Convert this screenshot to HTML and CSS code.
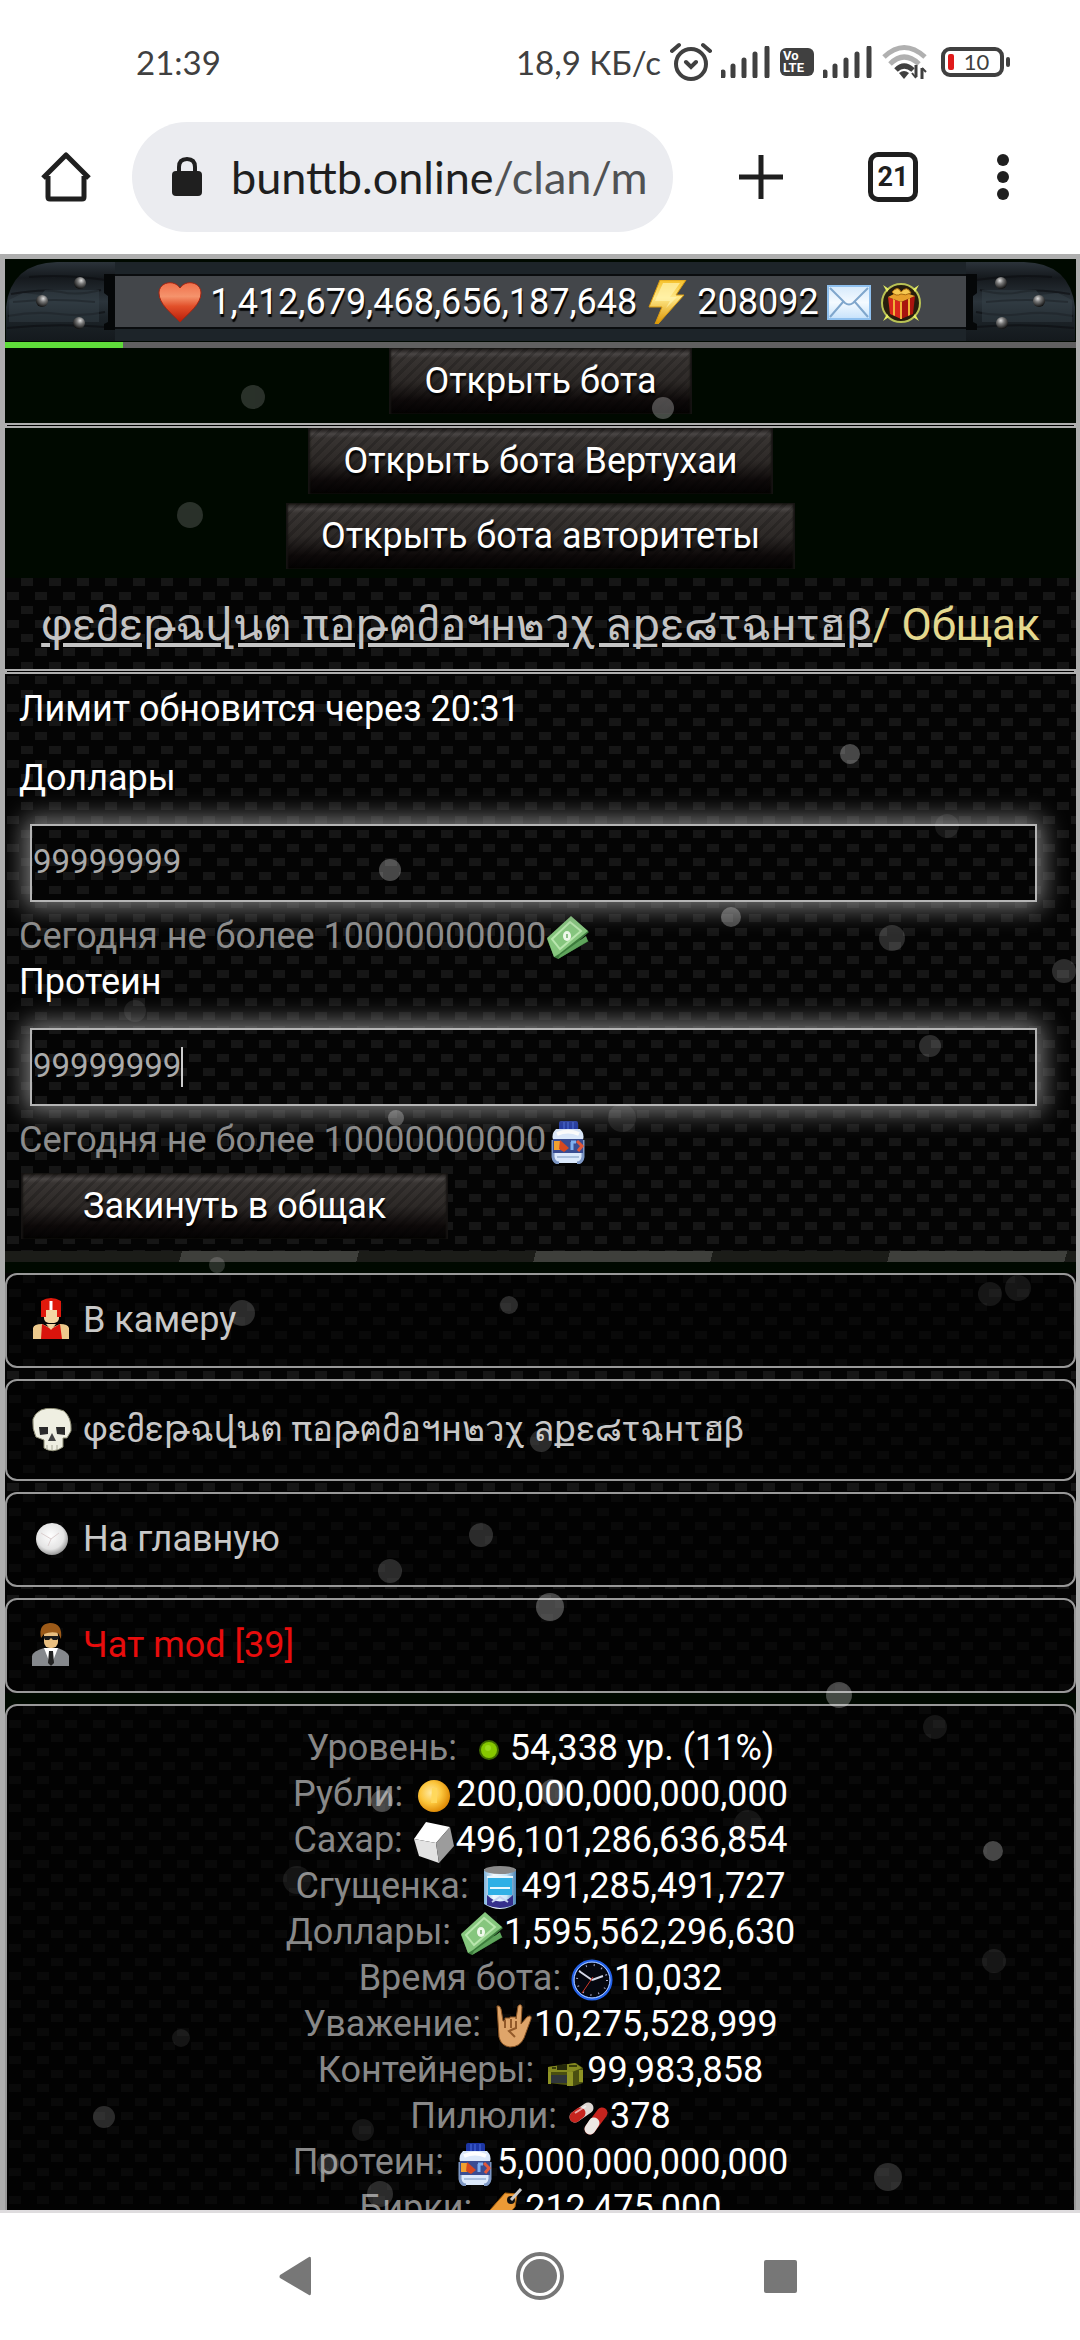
FILE: index.html
```
<!DOCTYPE html>
<html lang="ru">
<head>
  <meta charset="UTF-8">
  <meta name="viewport" content="width=device-width, initial-scale=1">
  <title>Общак</title>
  <link rel="stylesheet" href="styles.css">
</head>
<body>
  <!-- shared icons and gradients -->
  <svg class="sprite" width="0" height="0" aria-hidden="true">
    <defs>
      <linearGradient id="gHeart" x1="0" y1="0" x2="0" y2="1">
        <stop offset="0" stop-color="#f0704a"/><stop offset=".35" stop-color="#f5936c"/><stop offset=".6" stop-color="#e2502a"/><stop offset="1" stop-color="#b81c08"/>
      </linearGradient>
      <linearGradient id="gBolt" x1="0" y1="0" x2="0" y2="1">
        <stop offset="0" stop-color="#f5c02a"/><stop offset=".4" stop-color="#ffe98a"/><stop offset="1" stop-color="#dc9400"/>
      </linearGradient>
      <linearGradient id="gMail" x1="0" y1="0" x2="0" y2="1">
        <stop offset="0" stop-color="#d5e9fb"/><stop offset=".5" stop-color="#f4faff"/><stop offset="1" stop-color="#c6e2fb"/>
      </linearGradient>
      <radialGradient id="gCoin" cx=".4" cy=".4" r=".6">
        <stop offset="0" stop-color="#ffe9a0"/><stop offset=".55" stop-color="#fcc63c"/><stop offset="1" stop-color="#e08d08"/>
      </radialGradient>
      <radialGradient id="gBall" cx=".45" cy=".4" r=".6">
        <stop offset="0" stop-color="#fff"/><stop offset=".7" stop-color="#e4e4e4"/><stop offset="1" stop-color="#999"/>
      </radialGradient>
      <radialGradient id="gRivet" cx=".6" cy=".3" r=".7">
        <stop offset="0" stop-color="#ddd"/><stop offset=".4" stop-color="#777"/><stop offset="1" stop-color="#111"/>
      </radialGradient>
      <linearGradient id="gWood" x1="0" y1="0" x2="0" y2="1">
        <stop offset="0" stop-color="#2b333a"/><stop offset=".2" stop-color="#15191d"/><stop offset=".5" stop-color="#2b343b"/><stop offset=".7" stop-color="#1c2328"/><stop offset="1" stop-color="#14191d"/>
      </linearGradient>
      <linearGradient id="gCan" x1="0" y1="0" x2="1" y2="0">
        <stop offset="0" stop-color="#7fb4dc"/><stop offset=".3" stop-color="#f2faff"/><stop offset=".7" stop-color="#c8e6fa"/><stop offset="1" stop-color="#4c84b4"/>
      </linearGradient>
    </defs>

    <symbol id="i-heart" viewBox="0 0 44 44">
      <path d="M22 42C13 33 1 24 1 13 1 2 16-1 22 8 28-1 43 2 43 13 43 24 31 33 22 42Z" fill="url(#gHeart)" stroke="#a82410"/>
    </symbol>
    <symbol id="i-bolt" viewBox="0 0 44 44">
      <path d="M15 0H41L31 15H39L13 44H10L17 27H4Z" fill="url(#gBolt)" stroke="#d99a10"/>
      <path d="M18 3H35L25 17H32L21 28L25 21H10Z" fill="#fff3b0" opacity=".7"/>
    </symbol>
    <symbol id="i-mail" viewBox="0 0 44 44">
      <path d="M1 6H43V39H1Z" fill="url(#gMail)" stroke="#8fc0ee" stroke-width="2"/>
      <path d="M3 8L18 23Q22 26 26 23L41 8M3 37L16 22M41 37L28 22" fill="none" stroke="#7fa6cc" stroke-width="2"/>
    </symbol>
    <symbol id="i-gift" viewBox="0 0 44 44">
      <circle cx="22" cy="23" r="19" fill="#271d0d" stroke="#b9c255" stroke-width="2"/>
      <path d="M4 5L10 9 8 12ZM40 5L34 9 36 12ZM4 41L10 37 8 34ZM40 41L34 37 36 34Z" fill="#e6ee62"/>
      <path d="M9 17L22 22V39L11 34Z" fill="#d8281c"/><path d="M22 22L36 16 34 34 22 39Z" fill="#a8140e"/>
      <path d="M9 17L21 11 36 16 22 22Z" fill="#e8a02c"/>
      <path d="M14 19L16 20V36L14 35ZM29 19L31 18V35L29 36ZM21 22H23V39H21Z" fill="#f0b238"/>
      <path d="M13 12Q19 5 22 12 28 5 32 13Q26 16 22 14 17 17 13 12Z" fill="#f6c850" stroke="#a86a10"/>
    </symbol>
    <symbol id="i-cash" viewBox="0 0 44 44">
      <path d="M1 23L25 1 43 16 34 24 43 25 12 43 8 41Z" fill="#3c7c3c"/>
      <path d="M1 22L25 0 42 15 13 38 8 41Z" fill="#86c67e"/>
      <path d="M14 39L40 20 42 25 12 43Z" fill="#5fa45c"/>
      <path d="M6 23L24 6 35 15 14 33Z" fill="none" stroke="#b9e6ae" stroke-width="2"/>
      <ellipse cx="21" cy="20" rx="4" ry="5" fill="#eef8ea"/><path d="M21 18V22" stroke="#8fc28a" stroke-width="2"/>
    </symbol>
    <symbol id="i-jar" viewBox="0 0 44 44">
      <rect x="13" y="1" width="19" height="11" rx="2" fill="#1d36a4"/><path d="M18 2V11M22 2V11M27 2V11" stroke="#4b6fe0"/>
      <path d="M10 9H34Q39 14 37 20V37Q36 43 31 43H13Q8 43 7 37V20Q5 14 10 9Z" fill="#dce9fb"/>
      <path d="M7 20V37Q8 43 13 43M37 20V37Q36 43 31 43" fill="none" stroke="#7d97c4" stroke-width="3"/>
      <path d="M11 14Q22 9 33 14" stroke="#fff" stroke-width="4" fill="none"/>
      <rect x="7" y="19" width="30" height="14" fill="#3a4d92"/>
      <path d="M8 21H14V30H8Z" fill="#f0a030"/><path d="M14 20L23 28 18 32 13 29Z" fill="#d6481f"/><path d="M25 22H30M26 22V30" stroke="#7fb0f0" stroke-width="3"/><path d="M31 21L36 26 32 31" stroke="#e2583a" stroke-width="3" fill="none"/>
      <path d="M11 37H33" stroke="#a9bfdd" stroke-width="2"/>
    </symbol>
    <symbol id="i-cap" viewBox="0 0 44 44">
      <path d="M4 41V30Q5 26 13 26L22 30 31 26Q39 26 40 30V41Z" fill="#ecc98c"/>
      <path d="M13 26L22 31 31 26 33 41H12Z" fill="#d9140c"/>
      <rect x="15" y="11" width="15" height="14" rx="5" fill="#f3d7a2"/>
      <path d="M12 3Q22-3 32 3V19H28V12H17V19H12Z" fill="#e0190c"/><path d="M22 3V12" stroke="#fff" stroke-width="3"/>
      <path d="M17 26L22 32 27 26Z" fill="#f3d7a2"/>
    </symbol>
    <symbol id="i-skull" viewBox="0 0 44 44">
      <path d="M12 2Q22-2 35 3 43 10 42 23L38 30H34V39Q24 46 15 40V32L7 29Q3 21 4 11 6 5 12 2Z" fill="#efefe2" stroke="#8b8b73"/>
      <path d="M10 19H19V26L11 27ZM27 19H36V27L28 26Z" fill="#2a2a2a"/><path d="M23 25L19 33H27Z" fill="#444"/>
      <path d="M18 37V42M23 37V43M28 37V42" stroke="#a8a897"/>
    </symbol>
    <symbol id="i-ball" viewBox="0 0 44 44">
      <circle cx="23" cy="22" r="16" fill="url(#gBall)"/>
      <path d="M12 16L22 22 30 16M22 22L19 29" fill="none" stroke="#dccfcf"/>
    </symbol>
    <symbol id="i-agent" viewBox="0 0 44 44">
      <path d="M3 43V33Q4 28 15 25H29Q38 28 40 33V43Z" fill="#85888c"/>
      <path d="M15 25L22 43 29 25Z" fill="#fff"/><path d="M20 28H24L25 40 22 43 19 40Z" fill="#222"/>
      <rect x="15" y="6" width="14" height="19" rx="6" fill="#e9bf80"/>
      <path d="M12 15Q9 1 21 0 34 0 32 16L29 10Q22 8 15 11Z" fill="#9c5a18"/>
      <path d="M14 13H30V15L28 17H24L22 15 20 17H16Z" fill="#1a1a1a"/>
    </symbol>
    <symbol id="i-dot" viewBox="0 0 44 44"><circle cx="23" cy="22" r="10" fill="#3f6a00"/><circle cx="23" cy="22" r="8" fill="#86c800"/><circle cx="22" cy="20" r="3" fill="#9bdb1c"/></symbol>
    <symbol id="i-coin" viewBox="0 0 44 44"><circle cx="22" cy="22" r="16" fill="url(#gCoin)"/><path d="M20 14H25V29H19Z" fill="#ffd85c"/></symbol>
    <symbol id="i-sugar" viewBox="0 0 44 44">
      <path d="M2 19L14 2 38 7 24 23Z" fill="#fff"/><path d="M2 19L24 23 27 43 7 36Z" fill="#e3e3e3"/><path d="M24 23L38 7 42 26 27 43Z" fill="#9c9c9c"/>
    </symbol>
    <symbol id="i-can" viewBox="0 0 44 44">
      <path d="M6 3V38Q22 48 38 38V3Z" fill="url(#gCan)"/><path d="M10 12H34V29H10Z" fill="#30b0e6"/>
      <path d="M9 29Q22 42 35 29V39Q22 45 9 39Z" fill="#35308c"/><path d="M14 36L22 31 30 36" stroke="#c7d4f0" stroke-width="2" fill="none"/>
      <ellipse cx="22" cy="4" rx="16" ry="4" fill="#8a8a8a"/><path d="M9 11H35M12 22H32" stroke="#eaf8ff" stroke-width="2"/>
    </symbol>
    <symbol id="i-clock" viewBox="0 0 44 44">
      <circle cx="22" cy="22" r="19" fill="#05070f" stroke="#2260e8" stroke-width="3"/><circle cx="22" cy="22" r="18" fill="none" stroke="#b6d0ff"/>
      <circle cx="22" cy="22" r="15" fill="none" stroke="#aac" stroke-width="2" stroke-dasharray="1 7"/>
      <path d="M22 22L9 13M22 22L33 18" stroke="#d4d8e8" stroke-width="2"/><path d="M23 19L12 35" stroke="#d03828"/>
    </symbol>
    <symbol id="i-hand" viewBox="0 0 44 44">
      <path d="M7 2Q10 1 11 5L13 17H15V14H20V13H26V15L28 2Q31-1 32 3L31 20 37 13Q42 10 41 15L34 34Q30 43 20 43 11 42 9 33Z" fill="#dfa56a" stroke="#8a5424"/>
      <path d="M15 16V24M21 15V24M26 17V24L19 27 25 33" fill="none" stroke="#935a2a" stroke-width="2"/>
    </symbol>
    <symbol id="i-crate" viewBox="0 0 44 44">
      <path d="M5 17L33 13 40 18V33L31 36 6 33Z" fill="#4a4f10"/><path d="M8 25H27V33H8Z" fill="#30363a"/>
      <path d="M5 17L32 13 39 18 29 22H5Z" fill="#858a20"/><path d="M14 15L24 14V20H14Z" fill="#24280a"/>
      <path d="M5 22H8V34H5ZM24 22H30V36H24ZM36 20H40V32H36Z" fill="#8f9424"/>
      <path d="M9 18H13M26 16H34" stroke="#3b3f0c" stroke-width="2"/>
    </symbol>
    <symbol id="i-pills" viewBox="0 0 44 44">
      <g stroke-width="11" stroke-linecap="round"><path d="M9 21L22 12" stroke="#ded8d4"/><path d="M9 21L14 17" stroke="#c6241e"/><path d="M36 17L24 33" stroke="#c6241e"/><path d="M28 27L24 33" stroke="#eee8e4"/></g>
      <path d="M9 17L20 10" stroke="#fff" stroke-width="2" opacity=".6"/>
    </symbol>
    <symbol id="i-tag" viewBox="0 0 44 44">
      <path d="M2 30L24 5 36 6 34 19 13 42Z" fill="#ec9a36" stroke="#a8600c"/><circle cx="30" cy="12" r="4" fill="#111"/>
      <path d="M30 12L40 1" stroke="#ccc" stroke-width="3"/><path d="M12 29L22 31M17 23L26 25" stroke="#91520c" stroke-width="2"/>
    </symbol>
    <symbol id="i-signal" viewBox="0 0 50 32">
      <path d="M2 26V30M12 20V30M23 14V30M34 8V30M46 2V30" stroke="#404040" stroke-width="5" stroke-linecap="round"/>
    </symbol>
    <symbol id="i-end" viewBox="0 0 110 79">
      <path d="M1 79V45Q6 1 52 0H110V79Z" fill="url(#gWood)"/>
      <path d="M24 15Q60 12 100 18M6 32Q40 26 56 30T96 28M3 54Q30 49 54 52T100 50M2 66Q50 61 100 65M8 40Q50 36 90 40" fill="none" stroke="#0b0d10" stroke-width="2" opacity=".6"/>
      <path d="M4 38L18 31 36 33 40 28 94 28V60H4Z" fill="#39454d" opacity=".4"/>
      <circle cx="75" cy="21" r="6" fill="url(#gRivet)"/><circle cx="37" cy="39" r="6" fill="url(#gRivet)"/><circle cx="74" cy="61" r="6" fill="url(#gRivet)"/>
      <path d="M99 12H110V68H99V62L103 60V34L99 31Z" fill="#050708"/>
    </symbol>
  </svg>

  <div class="status-bar">
    <span class="status-time">21:39</span>
    <div class="status-icons">
      <span class="status-speed">18,9 КБ/с</span>
      <svg width="42" height="40" viewBox="0 0 42 40" fill="none" stroke="#404040" stroke-width="4" stroke-linecap="round"><circle cx="21" cy="22" r="15"/><path d="M2 9L9 3M33 3L40 9M16 20L21 25 26 20"/></svg>
      <svg width="50" height="32"><use href="#i-signal"/></svg>
      <span class="volte">Vo<br>LTE</span>
      <svg width="50" height="32"><use href="#i-signal"/></svg>
      <svg class="wifi" width="46" height="36" viewBox="0 0 46 36" fill="none" stroke-width="5"><path d="M2 13Q22-6 43 13" stroke="#b0b0b0"/><path d="M8 20Q22 6 37 20" stroke="#b0b0b0"/><path d="M14 26Q22 18 31 26" stroke="#404040"/><path d="M17 29Q22 25 27 29L22 35Z" fill="#404040"/><path d="M34 21V33M40 24V35" stroke="#404040" stroke-width="3"/><path d="M30 29L34 34M40 24L44 28" stroke="#404040" stroke-width="2"/></svg>
      <span class="battery">10</span>
    </div>
  </div>

  <nav class="browser-bar">
    <button class="tool tool-home" aria-label="Домой">
      <svg width="50" height="50" viewBox="0 0 50 50" fill="none" stroke="#1f1f1f" stroke-width="5"><path d="M2 26L25 3 48 26M7 24V45Q7 47 9 47H41Q43 47 43 45V24" stroke-linejoin="round"/></svg>
    </button>
    <a class="url-box" href="#">
      <svg width="32" height="40" viewBox="0 0 32 40"><rect x="1" y="14" width="30" height="25" rx="4" fill="#1f1f1f"/><path d="M8 16V10Q8 2 16 2T24 10V16" fill="none" stroke="#1f1f1f" stroke-width="4"/></svg>
      <span class="url-text">bunttb.online<span class="url-path">/clan/m</span></span>
    </a>
    <button class="tool tool-plus" aria-label="Новая вкладка">
      <svg width="46" height="46" viewBox="0 0 46 46"><path d="M23 1V45M1 23H45" stroke="#1f1f1f" stroke-width="5"/></svg>
    </button>
    <button class="tool tool-tabs">21</button>
    <button class="tool tool-menu" aria-label="Меню">
      <svg width="12" height="46" viewBox="0 0 12 46" fill="#1f1f1f"><circle cx="6" cy="6" r="6"/><circle cx="6" cy="23" r="6"/><circle cx="6" cy="40" r="6"/></svg>
    </button>
  </nav>

  <main class="game">
    <header class="hud">
      <svg class="hud-end" width="110" height="79"><use href="#i-end"/></svg>
      <div class="hud-panel">
        <svg class="icon"><use href="#i-heart"/></svg>
        <span>1,412,679,468,656,187,648</span>
        <svg class="icon"><use href="#i-bolt"/></svg>
        <span>208092</span>
        <svg class="icon"><use href="#i-mail"/></svg>
        <svg class="icon"><use href="#i-gift"/></svg>
      </div>
      <svg class="hud-end hud-end-right" width="110" height="79"><use href="#i-end"/></svg>
    </header>
    <div class="exp"><div class="exp-fill" style="width: 11%"></div></div>

    <div class="bots"><button class="btn">Открыть бота</button></div>
    <div class="line"></div>
    <div class="bots">
      <button class="btn">Открыть бота Вертухаи</button>
      <button class="btn">Открыть бота авторитеты</button>
    </div>

    <section class="weave">
      <h1 class="title"><a href="#">φεმεթฉվนต πอթฅმอฯн๒วχ ลքε๘τฉнτฮβ</a>/ Общак</h1>
      <div class="line"></div>
      <form class="fund">
        <p class="limit">Лимит обновится через 20:31</p>
        <label for="dollars">Доллары</label>
        <div class="field"><input type="text" id="dollars" value="99999999"></div>
        <p class="hint">Сегодня не более 10000000000<svg class="icon"><use href="#i-cash"/></svg></p>
        <label for="protein">Протеин</label>
        <div class="field"><input type="text" id="protein" value="99999999"><span class="caret"></span></div>
        <p class="hint">Сегодня не более 10000000000<svg class="icon"><use href="#i-jar"/></svg></p>
        <button type="button" class="btn btn-submit">Закинуть в общак</button>
      </form>
      <div class="stripes"></div>
    </section>

    <nav class="menu">
      <a class="card" href="#"><svg class="icon"><use href="#i-cap"/></svg>В камеру</a>
      <a class="card card-clan" href="#"><svg class="icon"><use href="#i-skull"/></svg>φεმεթฉվนต πอթฅმอฯн๒วχ ลքε๘τฉнτฮβ</a>
      <a class="card" href="#"><svg class="icon"><use href="#i-ball"/></svg>На главную</a>
      <a class="card card-chat" href="#"><svg class="icon"><use href="#i-agent"/></svg>Чат mod [39]</a>
    </nav>

    <div class="stats">
      <div>Уровень: <svg class="icon"><use href="#i-dot"/></svg><b>54,338 ур. (11%)</b></div>
      <div>Рубли: <svg class="icon"><use href="#i-coin"/></svg><b>200,000,000,000,000</b></div>
      <div>Сахар: <svg class="icon"><use href="#i-sugar"/></svg><b>496,101,286,636,854</b></div>
      <div>Сгущенка: <svg class="icon"><use href="#i-can"/></svg><b>491,285,491,727</b></div>
      <div>Доллары: <svg class="icon"><use href="#i-cash"/></svg><b>1,595,562,296,630</b></div>
      <div>Время бота: <svg class="icon"><use href="#i-clock"/></svg><b>10,032</b></div>
      <div>Уважение: <svg class="icon"><use href="#i-hand"/></svg><b>10,275,528,999</b></div>
      <div>Контейнеры: <svg class="icon"><use href="#i-crate"/></svg><b>99,983,858</b></div>
      <div>Пилюли: <svg class="icon"><use href="#i-pills"/></svg><b>378</b></div>
      <div>Протеин: <svg class="icon"><use href="#i-jar"/></svg><b>5,000,000,000,000</b></div>
      <div>Бирки: <svg class="icon"><use href="#i-tag"/></svg><b>212,475,000</b></div>
    </div>

    <!-- falling snow -->
    <svg class="snow" viewBox="5 259 1071 1951" preserveAspectRatio="xMidYMin slice" fill="#fff" aria-hidden="true">
      <g opacity=".16">
        <circle cx="253" cy="397" r="12"/><circle cx="190" cy="515" r="13"/><circle cx="892" cy="938" r="13"/><circle cx="1064" cy="971" r="12"/>
        <circle cx="242" cy="1313" r="13"/><circle cx="509" cy="1305" r="9"/><circle cx="390" cy="1571" r="12"/><circle cx="930" cy="1046" r="11"/>
        <circle cx="481" cy="1535" r="12"/><circle cx="104" cy="2117" r="11"/><circle cx="888" cy="2177" r="14"/><circle cx="217" cy="1265" r="8"/>
        <circle cx="541" cy="1441" r="11"/><circle cx="380" cy="2194" r="13"/><circle cx="328" cy="2164" r="11"/>
      </g>
      <g opacity=".08">
        <circle cx="990" cy="1294" r="12"/><circle cx="1018" cy="1288" r="13"/><circle cx="622" cy="1118" r="14"/><circle cx="135" cy="1011" r="11"/>
        <circle cx="947" cy="826" r="12"/><circle cx="935" cy="1727" r="12"/><circle cx="297" cy="1880" r="14"/><circle cx="994" cy="1961" r="12"/>
        <circle cx="181" cy="2038" r="9"/><circle cx="363" cy="2130" r="11"/><circle cx="748" cy="1824" r="14"/>
      </g>
      <g opacity=".27">
        <circle cx="663" cy="408" r="11"/><circle cx="850" cy="754" r="10"/><circle cx="390" cy="870" r="11"/><circle cx="731" cy="917" r="10"/>
        <circle cx="396" cy="1118" r="8"/><circle cx="550" cy="1607" r="14"/><circle cx="839" cy="1695" r="13"/><circle cx="382" cy="1801" r="11"/>
        <circle cx="553" cy="1792" r="13"/><circle cx="993" cy="1851" r="10"/>
      </g>
    </svg>
  </main>

  <nav class="system-bar">
    <button aria-label="Назад"><svg width="50" height="50" viewBox="0 0 50 50" fill="#777"><path d="M5 24L34 6Q36 5 36 8V42Q36 45 34 44L5 27Q4 26 5 24Z"/></svg></button>
    <button aria-label="Домой"><svg width="50" height="50" viewBox="0 0 50 50"><circle cx="25" cy="25" r="22" fill="none" stroke="#777" stroke-width="4"/><circle cx="25" cy="25" r="17" fill="#777"/></svg></button>
    <button aria-label="Недавние"><svg width="50" height="50" viewBox="0 0 50 50" fill="#777"><rect x="9" y="9" width="33" height="33" rx="2"/></svg></button>
  </nav>
</body>
</html>
```

FILE: styles.css
```
* {
  box-sizing: border-box;
}

body {
  margin: 0;
  height: 100vh;
  display: flex;
  flex-direction: column;
  background: #fff;
  font-family: Roboto, "Noto Sans", "DejaVu Sans", sans-serif;
  font-size: 36px;
  line-height: 46px;
}

button {
  font: inherit;
  border: 0;
  padding: 0;
  background: none;
}

svg {
  flex: none;
}

a {
  color: inherit;
  text-decoration: none;
}

p,
h1 {
  margin: 0;
  font-weight: 400;
}

.sprite {
  position: absolute;
}

.icon {
  width: 44px;
  height: 44px;
  margin: -4px 0;
  vertical-align: middle;
}

/* Phone status bar */
.status-bar {
  flex: none;
  height: 100px;
  padding: 24px 70px 0 136px;
  display: flex;
  align-items: center;
  justify-content: space-between;
  color: #404040;
  font-family: Lato, sans-serif;
  font-size: 33px;
}

.status-icons {
  display: flex;
  align-items: center;
  gap: 9px;
}

.volte {
  width: 34px;
  padding: 2px 3px;
  border-radius: 6px;
  background: #404040;
  color: #fff;
  font: 700 13px/12px Roboto, sans-serif;
}

.battery {
  position: relative;
  width: 63px;
  height: 30px;
  margin: 0 6px 0 4px;
  padding-left: 8px;
  border: 4px solid #404040;
  border-radius: 9px;
  font: 22px/22px Lato, sans-serif;
  text-align: center;
}

.battery::before,
.battery::after {
  content: "";
  position: absolute;
  background: #404040;
  border-radius: 2px;
}

.battery::before {
  left: 3px;
  top: 3px;
  width: 6px;
  height: 16px;
  background: #e01a1a;
}

.battery::after {
  right: -10px;
  top: 6px;
  width: 4px;
  height: 10px;
}

/* Browser toolbar */
.browser-bar {
  flex: none;
  height: 154px;
  padding: 0 71px 0 41px;
  display: flex;
  align-items: center;
}

.tool {
  display: flex;
  align-items: center;
  justify-content: center;
}

.url-box {
  flex: 1;
  height: 110px;
  margin: 0 65px 0 41px;
  padding: 0 20px 0 39px;
  display: flex;
  align-items: center;
  gap: 28px;
  border-radius: 55px;
  background: #ebecf0;
  color: #1f1f1f;
  font-family: Lato, sans-serif;
  font-size: 45px;
  line-height: 60px;
}

.url-text {
  white-space: nowrap;
}

.url-path {
  color: #505254;
}

.tool-tabs {
  width: 50px;
  height: 50px;
  margin: 0 79px 0 84px;
  border: 5px solid #1f1f1f;
  border-radius: 10px;
  font-size: 27px;
  font-weight: 700;
  color: #1f1f1f;
}

/* Game page */
.game {
  position: relative;
  flex: 1;
  min-height: 0;
  overflow: hidden;
  border: solid #aeaeae;
  border-width: 5px 4px 0 5px;
  background: #000900;
  color: #fff;
}

.hud {
  display: flex;
  height: 83px;
  padding: 3px 0 1px;
}

.hud-end-right {
  transform: scaleX(-1);
}

.hud-panel {
  flex: 1;
  display: flex;
  align-items: center;
  justify-content: center;
  gap: 8px;
  border: solid #1d2429;
  border-width: 12px 0;
  background: #43464a;
  box-shadow: inset 0 2px #0a0c0e, inset 0 -2px #0a0c0e;
  text-shadow: 1px 3px 1px #000;
}

.exp {
  height: 6px;
  background: #606060;
}

.exp-fill {
  height: 100%;
  background: #5fdc3a;
}

.bots {
  display: flex;
  flex-direction: column;
  align-items: center;
}

.btn {
  height: 66px;
  margin-bottom: 9px;
  padding: 0 35px;
  color: #fff;
  text-shadow: 1px 3px 2px #000;
  background:
    repeating-linear-gradient(135deg, rgba(0, 0, 0, 0.18) 0 3px, transparent 3px 8px),
    linear-gradient(#1a1716 0, #4a4645 6px, #383432 10px, #2d2927 50%, #0d0909 80%, #030202);
  box-shadow: inset 2px 0 2px #161312, inset -2px 0 2px #161312;
}

.line {
  height: 5px;
  border: 2px solid #aeaeae;
  background: #000;
}

/* black woven background, two bricks per 28px tile */
.weave,
.menu,
.card,
.stats {
  background-color: #040404;
  background-image:
    conic-gradient(from 90deg at 16px 8px, transparent 270deg, #161616 0),
    conic-gradient(from 90deg at 16px 8px, transparent 270deg, #161616 0);
  background-position: 0 0, 14px 14px;
  background-size: 28px 28px;
}

.title {
  padding: 24px 0 21px;
  text-align: center;
  font-size: 44px;
  color: #e5d98f;
}

.title a {
  color: #c4c4c4;
  text-decoration: underline;
}

.fund {
  padding: 12px 14px 4px;
}

.fund label {
  display: block;
}

.limit {
  margin-bottom: 23px;
}

.field {
  position: relative;
  margin: 23px 25px 11px 11px;
}

.field input {
  display: block;
  width: 100%;
  height: 78px;
  padding: 0 1px 4px;
  border: 2px solid #b4b4b4;
  background: transparent;
  box-shadow: 0 0 24px 5px #808080;
  color: #aaa;
  font: inherit;
  font-size: 33px;
}

.caret {
  position: absolute;
  left: 151px;
  top: 19px;
  width: 2px;
  height: 40px;
  background: #ccc;
}

.hint {
  color: #8c8c8c;
}

.btn-submit {
  margin: 10px 0 8px 2px;
  padding: 0 62px;
}

.stripes {
  height: 11px;
  background: repeating-linear-gradient(105deg, #1b1c18 0 171px, #3e3f3b 171px 342px);
}

.menu {
  display: flex;
  flex-direction: column;
  gap: 11px;
  border: solid #000900;
  border-width: 11px 0;
}

.card,
.stats {
  border: 2px solid #999;
  border-radius: 12px;
  background-color: #020202;
  background-image:
    conic-gradient(from 90deg at 16px 8px, transparent 270deg, #090909 0),
    conic-gradient(from 90deg at 16px 8px, transparent 270deg, #090909 0);
}

.card {
  height: 95px;
  padding: 0 22px 2px;
  display: flex;
  align-items: center;
  gap: 10px;
  color: #c8c8c8;
}

.card-clan {
  height: 102px;
  padding-bottom: 0;
  font-size: 35px;
}

.card-chat {
  color: #e80c0c;
}

.stats {
  padding: 19px 0;
  text-align: center;
  color: #888;
}

.stats b {
  font-weight: 400;
  color: #fff;
}

.snow {
  position: absolute;
  left: 0;
  top: 0;
  width: 100%;
  height: 100%;
  pointer-events: none;
}

/* Android navigation */
.system-bar {
  flex: none;
  height: 130px;
  padding-bottom: 2px;
  display: flex;
  align-items: center;
  justify-content: center;
  gap: 190px;
  border-top: 3px solid #dedcde;
}

.system-bar button {
  display: flex;
}
```
